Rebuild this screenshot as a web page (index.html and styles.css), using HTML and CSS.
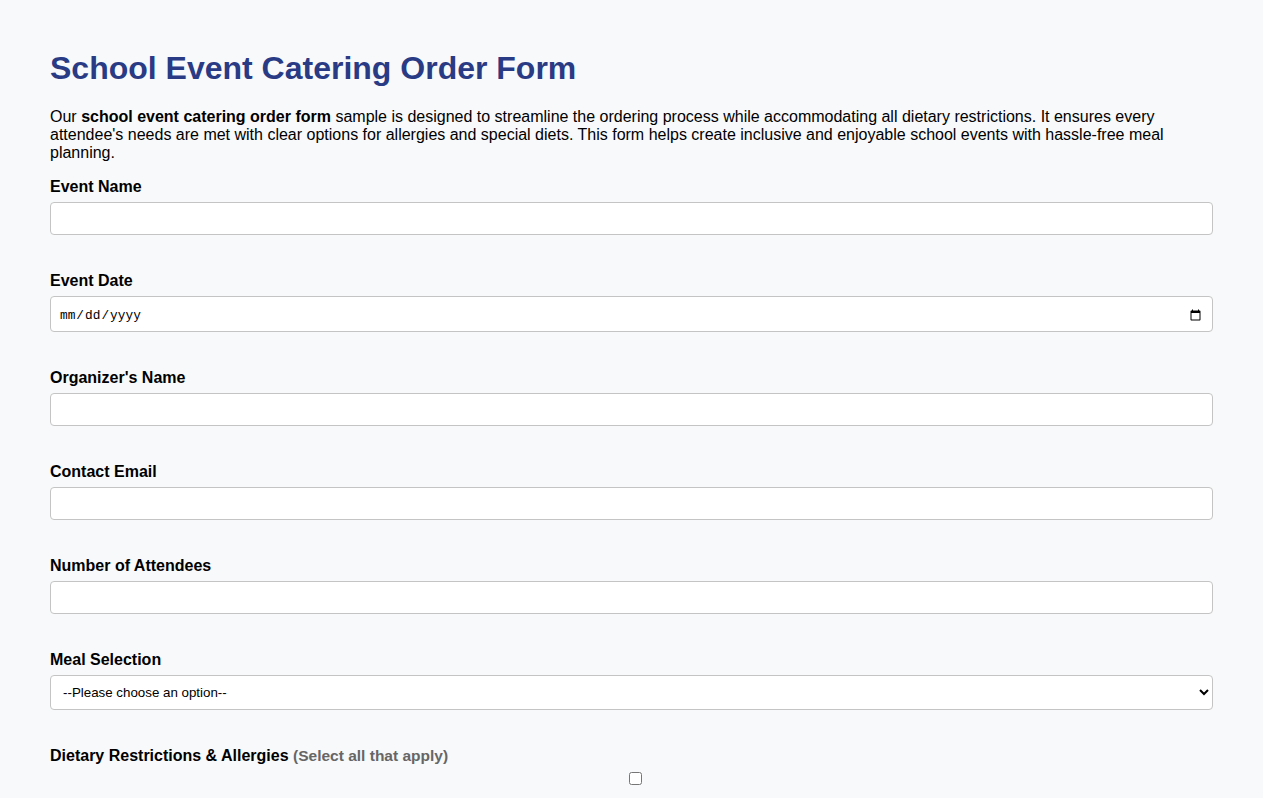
FILE: index.html
```html
<!DOCTYPE html>
<html lang="en">
<head>
<meta charset="utf-8">
<title>School Event Catering Order Form</title>
<link rel="stylesheet" href="styles.css">
</head>
<body>
<div class="page">
  <h1 class="title">School Event Catering Order Form</h1>
  <p class="intro">Our <strong>school event catering order form</strong> sample is designed to streamline the ordering process while accommodating all dietary restrictions. It ensures every attendee's needs are met with clear options for allergies and special diets. This form helps create inclusive and enjoyable school events with hassle-free meal planning.</p>
  <form class="form">
    <div class="group">
      <label class="label" for="event-name">Event Name</label>
      <input class="field" id="event-name" type="text">
    </div>
    <div class="group">
      <label class="label" for="event-date">Event Date</label>
      <input class="field date" id="event-date" type="date">
    </div>
    <div class="group">
      <label class="label" for="organizer">Organizer's Name</label>
      <input class="field" id="organizer" type="text">
    </div>
    <div class="group">
      <label class="label" for="email">Contact Email</label>
      <input class="field" id="email" type="email">
    </div>
    <div class="group">
      <label class="label" for="attendees">Number of Attendees</label>
      <input class="field" id="attendees" type="number">
    </div>
    <div class="group">
      <label class="label" for="meal">Meal Selection</label>
      <select class="field select" id="meal">
        <option>--Please choose an option--</option>
      </select>
    </div>
    <div class="group">
      <label class="label">Dietary Restrictions &amp; Allergies <span class="hint">(Select all that apply)</span></label>
      <input class="check" type="checkbox">
    </div>
  </form>
</div>
</body>
</html>
```
FILE: styles.css
```css
html, body {
  margin: 0;
  padding: 0;
  background: #f8f9fa;
}
body {
  font-family: "Liberation Sans", Arial, sans-serif;
  font-size: 16px;
  color: #000;
}
.page {
  padding: 29px 50px 40px;
}
.title {
  font-size: 32px;
  font-weight: bold;
  color: #2a3b85;
  margin: 21px 0 21px;
  line-height: 37px;
}
.intro {
  margin: 0 0 16px;
  line-height: 18px;
}
.form {
  margin: 0;
}
.group {
  margin-bottom: 37px;
}
.label {
  display: block;
  font-weight: bold;
  line-height: 18px;
  margin-bottom: 6px;
}
.hint {
  color: #666;
  font-size: 15.5px;
}
.field {
  display: block;
  width: 100%;
  box-sizing: border-box;
  padding: 8px;
  border: 1px solid #c4c4c4;
  border-radius: 4px;
  background: #fff;
  font-family: "Liberation Sans", Arial, sans-serif;
  font-size: 13.33px;
  line-height: 15px;
  height: 33px;
  margin: 0;
  color: #000;
}
.date {
  height: 36px;
  padding-top: 10px;
  padding-bottom: 8px;
  font-family: "Liberation Mono", "DejaVu Sans Mono", monospace;
  font-size: 12.8px;
}
.select {
  height: 35px;
  padding: 8px 8px 8px 8px;
}
.check {
  display: block;
  width: 100%;
  height: 13px;
  margin: 7px 3px 3px 4px;
}
```
